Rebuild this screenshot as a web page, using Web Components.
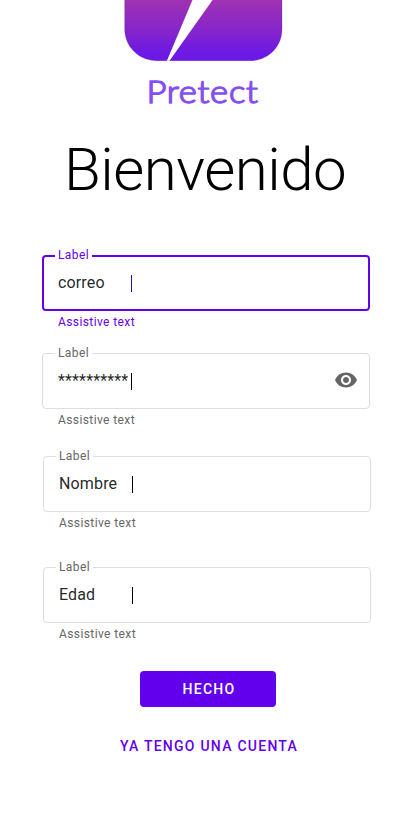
<!DOCTYPE html>
<html lang="es">
<head>
<meta charset="utf-8">
<title>Pretect</title>
<style>
html,body{margin:0;background:#fff}
body{font-family:Roboto,"Liberation Sans",sans-serif;width:411px;height:823px;overflow:hidden}
</style>
</head>
<body>
<welcome-page></welcome-page>
<script>
class BrandLogo extends HTMLElement {
  constructor() {
    super();
    this.attachShadow({mode: 'open'}).innerHTML = `
<style>:host{display:block;height:120px}svg{display:block}</style>
<svg width="411" height="120" viewBox="0 0 411 120">
  <defs><linearGradient id="g" gradientUnits="userSpaceOnUse" x1="0" y1="0" x2="0" y2="61">
    <stop offset="0" stop-color="#a032b2"/><stop offset=".5" stop-color="#8525cb"/><stop offset=".85" stop-color="#6d19e4"/><stop offset="1" stop-color="#6d19e4"/>
  </linearGradient></defs>
  <path d="M124.7 -2H282V29C282 47 268 60.7 250 60.7H157C139 60.7 124.7 47 124.7 29Z" fill="url(#g)" stroke="#4d2a86" stroke-opacity=".45" stroke-width=".6"/>
  <path d="M193.3 -2H214L169 61.5H166.6Z" fill="#fff"/>
  <text transform="translate(146.4 103) scale(1.12 1)" font-family="Lato, sans-serif" font-weight="300" font-size="31" textLength="99.5" lengthAdjust="spacing" fill="#8450f0" stroke="#8450f0" stroke-width="1.4" stroke-linejoin="round">Pretect</text>
</svg>`;
  }
}
customElements.define('brand-logo', BrandLogo);

class TextField extends HTMLElement {
  constructor() {
    super();
    this.attachShadow({mode: 'open'}).innerHTML = `
<style>
:host{display:block;width:328px;height:76px;--c:#666;--b:#dedede}
:host([active]){--c:#6200ee;--b:#6200ee}
fieldset{box-sizing:border-box;width:328px;height:56px;margin:0;border:1px solid var(--b);border-radius:4px;padding:0;position:relative;min-width:0}
:host([active]) fieldset{border-width:2px}
.label{position:absolute;left:12px;top:-9px;height:16px;width:37px;box-sizing:border-box;padding-left:3px;background:#fff;color:var(--c);font-size:12px;line-height:16px;letter-spacing:.4px}
:host([active]) .label{left:11px;top:-10px}
.row{display:grid;grid-template-columns:73px 1px 1fr 24px;align-items:start;padding:19px 11px 0 15px}
:host([active]) .row{padding:18px 10px 0 14px}
.value{color:rgba(0,0,0,.87);font-size:16px;line-height:15px;letter-spacing:.15px;white-space:nowrap}
.caret{height:17px;width:1px;background:#000}
:host([active]) .caret{background:#30108c}
.icon{grid-column:4;height:0}
.help{padding:3px 0 0 16px;font-size:12px;line-height:16px;letter-spacing:.4px;color:var(--c)}
</style>
<fieldset><span class="label">Label</span>
<div class="row"><span class="value"><slot></slot></span><span class="caret"></span><span class="icon"><slot name="icon"></slot></span></div></fieldset>
<div class="help">Assistive text</div>`;
  }
}
customElements.define('text-field', TextField);

class EyeIcon extends HTMLElement {
  constructor() {
    super();
    this.attachShadow({mode: 'open'}).innerHTML = `
<style>:host{display:block;margin-top:-5px}svg{display:block}</style>
<svg width="24" height="24" viewBox="0 0 24 24"><path fill="#666" d="M12 4.5C7 4.5 2.73 7.61 1 12c1.73 4.39 6 7.5 11 7.5s9.27-3.11 11-7.5c-1.73-4.39-6-7.5-11-7.5zM12 17c-2.76 0-5-2.24-5-5s2.24-5 5-5 5 2.24 5 5-2.24 5-5 5zm0-8c-1.66 0-3 1.34-3 3s1.34 3 3 3 3-1.34 3-3-1.34-3-3-3z"/></svg>`;
  }
}
customElements.define('eye-icon', EyeIcon);

class ActionButton extends HTMLElement {
  constructor() {
    super();
    this.attachShadow({mode: 'open'}).innerHTML = `
<style>
:host{display:block}
button{display:block;box-sizing:border-box;height:36px;width:100%;border:0;border-radius:4px;padding:0;background:none;color:#6200ee;font:500 14px/36px Roboto,sans-serif;letter-spacing:1.25px;white-space:nowrap}
:host([filled]) button{background:#6200ee;color:#fff;padding-left:2px}
</style><button><slot></slot></button>`;
  }
}
customElements.define('action-button', ActionButton);

class WelcomePage extends HTMLElement {
  constructor() {
    super();
    this.attachShadow({mode: 'open'}).innerHTML = `
<style>
:host{display:flex;flex-direction:column;width:411px;height:823px;background:#fff}
h1{margin:15px 0 0 64px;height:70px;font-weight:300;font-size:60px;line-height:70px;letter-spacing:-.5px;color:#000;white-space:nowrap}
.first{margin:50px 0 0 42px}
.second{margin:22px 0 0 42px}
.third{margin:27px 0 0 43px}
.fourth{margin:35px 0 0 43px}
.done{width:136px;margin:28px 0 0 140px}
.login{width:194px;margin:21px 0 0 112px}
</style>
<brand-logo></brand-logo>
<h1>Bienvenido</h1>
<text-field class="first" active>correo</text-field>
<text-field class="second">**********<eye-icon slot="icon"></eye-icon></text-field>
<text-field class="third">Nombre</text-field>
<text-field class="fourth">Edad</text-field>
<action-button class="done" filled>HECHO</action-button>
<action-button class="login">YA TENGO UNA CUENTA</action-button>`;
  }
}
customElements.define('welcome-page', WelcomePage);
</script>
</body>
</html>
